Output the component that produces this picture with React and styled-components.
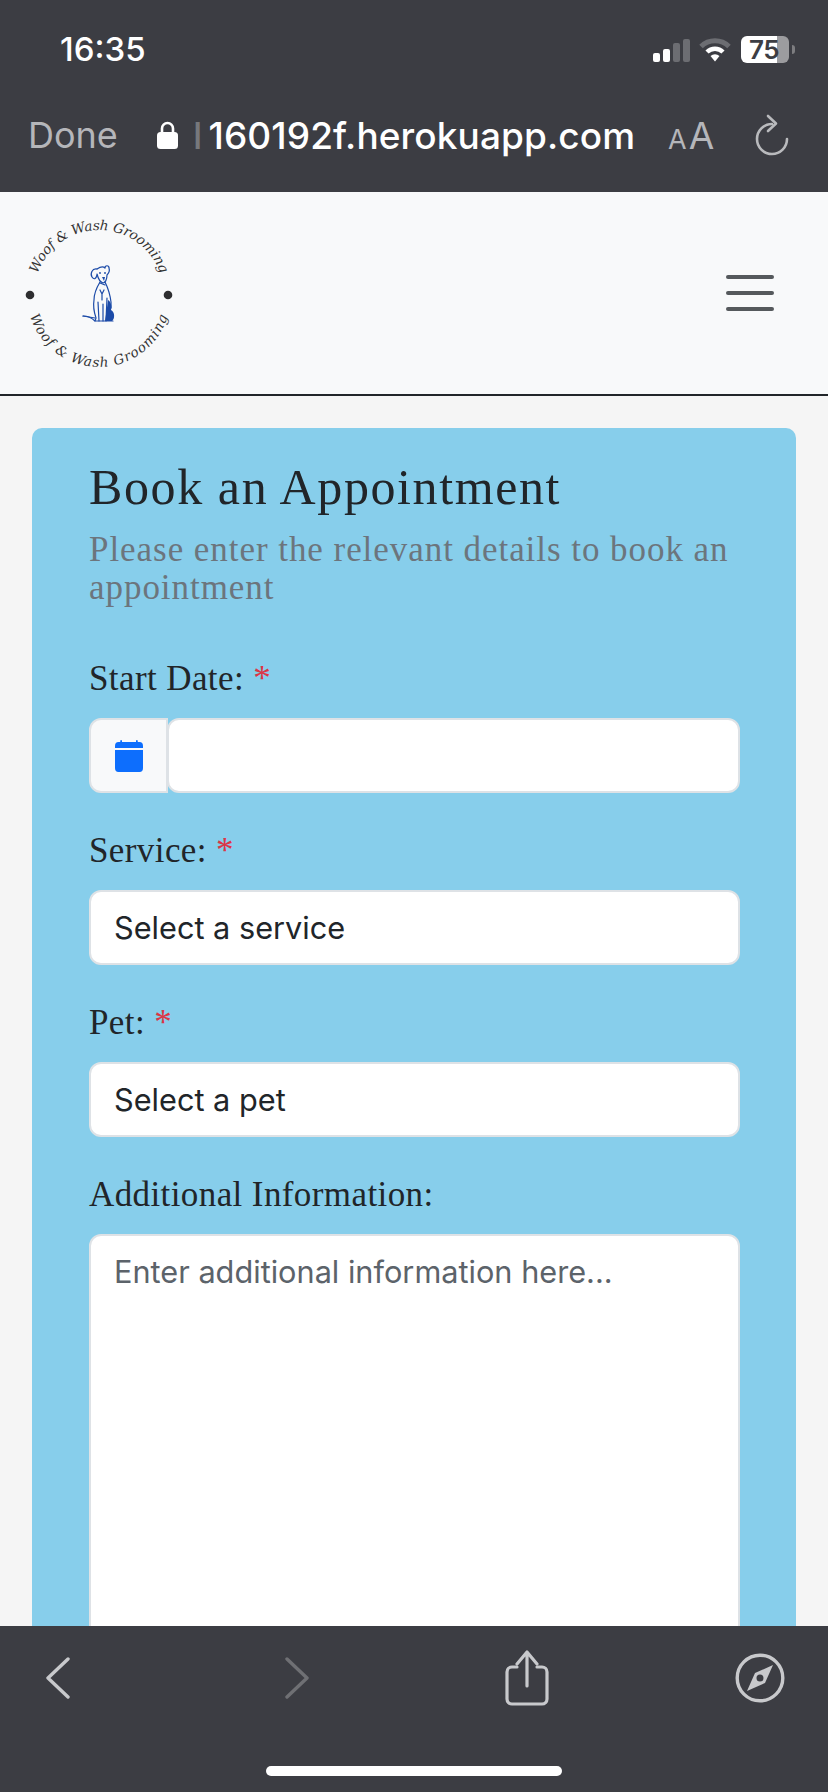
import React from 'react'
import styled, { createGlobalStyle } from 'styled-components'

const GlobalStyle = createGlobalStyle`
  * {
    box-sizing: border-box;
  }
  html, body {
    margin: 0;
    padding: 0;
    background: #3c3d43;
  }
`

const Logo = () => (
  <LogoSvg viewBox="0 3 200 200">
    <defs>
      <path id="arcTop" d="M 34 105 A 65 65 0 0 1 164 105" fill="none" />
      <path id="arcBottom" d="M 27 105 A 72 72 0 0 0 171 105" fill="none" />
    </defs>
    <LogoText>
      <textPath href="#arcTop" startOffset="10.5%" textLength="161" lengthAdjust="spacing">
        Woof &amp; Wash Grooming
      </textPath>
    </LogoText>
    <LogoText>
      <textPath href="#arcBottom" startOffset="9.4%" textLength="183" lengthAdjust="spacing">
        Woof &amp; Wash Grooming
      </textPath>
    </LogoText>
    <circle cx="30" cy="105" r="4.3" fill="#2e2e30" />
    <circle cx="168" cy="105" r="4.3" fill="#2e2e30" />
    {/* dog */}
    <g fill="none" stroke="#1c4ba8" strokeWidth="1.2" strokeLinecap="round" strokeLinejoin="round">
      <path d="M97 79 C92 78 90 84 92 87 C94 90 96 89 97 85" />
      <path d="M97 79 C100 77 103 76 105 78 C105 75 109 75 109 78 C110 81 108 84 107 85 C107 90 105 93 103 93 C100 92 98 88 97 84" />
      <path d="M100 92 C97 97 94 103 94 110 C93 116 94 122 96 128 L95 131" />
      <path d="M105 92 C108 98 110 104 111 112 L111 118" />
      <path d="M100 93 L105 95" />
      <path d="M100 100 L102 104 L104 100 M102 104 L102 110" />
      <path d="M98 112 L99 131 M103 114 L103 131 M107 108 L106 131" />
      <path d="M83 126 C88 126 92 128 95 131 L113 131" />
      <path d="M83 126 L95 128" />
    </g>
    <path d="M108 110 C111 112 112 116 111 120 C115 122 115 129 112 131 L105 131 C106 125 107 118 108 110 Z" fill="#1c4ba8" />
    <circle cx="100" cy="83" r="0.9" fill="#1c4ba8" />
    <circle cx="105" cy="83" r="0.9" fill="#1c4ba8" />
    <path d="M102 87 L105 87 L104 91 Z" fill="#1c4ba8" />
  </LogoSvg>
)

const CalendarIcon = () => (
  <svg width="28" height="32" viewBox="0 0 16 16" preserveAspectRatio="none" fill="#0d6efd">
    <path d="M3.5 0a.5.5 0 0 1 .5.5V1h8V.5a.5.5 0 0 1 1 0V1h1a2 2 0 0 1 2 2v11a2 2 0 0 1-2 2H2a2 2 0 0 1-2-2V5h16V4H0V3a2 2 0 0 1 2-2h1V.5a.5.5 0 0 1 .5-.5" />
  </svg>
)

const App = () => {
  return (
    <Page>
      <GlobalStyle />
      <BrowserTop>
        <StatusRow>
          <Clock>16:35</Clock>
          <StatusIcons>
            <SignalBars>
              <Bar $h={9} $on />
              <Bar $h={13} $on />
              <Bar $h={19} />
              <Bar $h={23} />
            </SignalBars>
            <svg width="32" height="24" viewBox="0 0 32 24" fill="none" strokeLinecap="butt">
              <path d="M2 8.5 A 20 20 0 0 1 30 8.5" stroke="#6c6d72" strokeWidth="5" />
              <path d="M8 14 A 11.5 11.5 0 0 1 24 14" stroke="#fff" strokeWidth="4.5" />
              <path d="M11.5 18 L16 23.5 L20.5 18 A 7 7 0 0 0 11.5 18 Z" fill="#fff" />
            </svg>
            <Battery>
              75
              <BatteryNub />
            </Battery>
          </StatusIcons>
        </StatusRow>
        <UrlRow>
          <DoneLabel>Done</DoneLabel>
          <UrlBox>
            <svg width="21" height="28" viewBox="0 0 21 28" fill="#fff">
              <path d="M5 12 V7.5 A5.5 5.5 0 0 1 16 7.5 V12" fill="none" stroke="#fff" strokeWidth="2.6" />
              <rect x="0" y="11" width="21" height="17" rx="3.5" />
            </svg>
            <UrlText>
              <Faded>l</Faded>160192f.herokuapp.com
            </UrlText>
          </UrlBox>
          <ReaderLabel>
            <SmallA>A</SmallA>A
          </ReaderLabel>
          <svg width="34" height="42" viewBox="0 0 34 42" fill="none" stroke="#b9babd" strokeWidth="2.6" strokeLinecap="round" strokeLinejoin="round">
            <path d="M17 10 A 15 15 0 1 0 32 25" />
            <path d="M13 2 L21 9.5 L13 17" />
          </svg>
        </UrlRow>
      </BrowserTop>

      <SiteHeader>
        <Logo />
        <Hamburger>
          <HamburgerLine />
          <HamburgerLine />
          <HamburgerLine />
        </Hamburger>
      </SiteHeader>

      <Content>
        <Card>
          <Title>Book an Appointment</Title>
          <Subtitle>Please enter the relevant details to book an appointment</Subtitle>

          <Field>
            <FieldLabel>
              Start Date: <Required>*</Required>
            </FieldLabel>
            <InputGroup>
              <Addon>
                <CalendarIcon />
              </Addon>
              <GroupInput type="text" />
            </InputGroup>
          </Field>

          <Field>
            <FieldLabel>
              Service: <Required>*</Required>
            </FieldLabel>
            <Select defaultValue="">
              <option value="">Select a service</option>
            </Select>
          </Field>

          <Field>
            <FieldLabel>
              Pet: <Required>*</Required>
            </FieldLabel>
            <Select defaultValue="">
              <option value="">Select a pet</option>
            </Select>
          </Field>

          <Field>
            <FieldLabel>Additional Information:</FieldLabel>
            <TextArea placeholder="Enter additional information here..." />
          </Field>
        </Card>
      </Content>

      <BrowserBottom>
        <ToolRow>
          <svg width="24" height="44" viewBox="0 0 24 44" fill="none" stroke="#c8c9cc" strokeWidth="3.4" strokeLinecap="round" strokeLinejoin="round">
            <path d="M22 3 L2 22 L22 41" />
          </svg>
          <svg width="24" height="44" viewBox="0 0 24 44" fill="none" stroke="#6f7074" strokeWidth="3.4" strokeLinecap="round" strokeLinejoin="round">
            <path d="M2 3 L22 22 L2 41" />
          </svg>
          <svg width="44" height="56" viewBox="0 0 44 56" fill="none" stroke="#c8c9cc" strokeWidth="3.2" strokeLinecap="round" strokeLinejoin="round">
            <path d="M12 17 H7 A 5 5 0 0 0 2 22 V49 A 5 5 0 0 0 7 54 H37 A 5 5 0 0 0 42 49 V22 A 5 5 0 0 0 37 17 H32" />
            <path d="M22 36 V2 M12 14 L22 2 L32 14" />
          </svg>
          <svg width="50" height="50" viewBox="0 0 50 50" fill="none">
            <circle cx="25" cy="25" r="22.8" stroke="#c8c9cc" strokeWidth="3.4" />
            <path fillRule="evenodd" fill="#c8c9cc" d="M38 12 L30 30 L12 38 L20 20 Z M25 21.5 A 3.5 3.5 0 1 0 25 28.5 A 3.5 3.5 0 1 0 25 21.5 Z" />
          </svg>
        </ToolRow>
        <HomeBar />
      </BrowserBottom>
    </Page>
  )
}

export default App

const Page = styled.div`
  width: 828px;
  height: 1792px;
  display: flex;
  flex-direction: column;
  overflow: hidden;
  background: #f5f5f5;
`
const BrowserTop = styled.div`
  height: 192px;
  flex-shrink: 0;
  background: #3c3d43;
  padding: 36px 34px 0 28px;
  font-family: Inter, 'Liberation Sans', sans-serif;
`
const StatusRow = styled.div`
  height: 27px;
  display: flex;
  align-items: center;
  justify-content: space-between;
`
const Clock = styled.div`
  margin-left: 32px;
  font-size: 33px;
  font-weight: 500;
  color: #fff;
  line-height: 27px;
`
const StatusIcons = styled.div`
  display: flex;
  align-items: center;
  gap: 9px;
  margin-right: 5px;
`
const SignalBars = styled.div`
  display: flex;
  align-items: flex-end;
  gap: 3px;
  height: 24px;
`
const Bar = styled.span`
  width: 7px;
  height: ${(p) => p.$h}px;
  border-radius: 2px;
  background: ${(p) => (p.$on ? '#fff' : '#6c6d72')};
`
const Battery = styled.div`
  position: relative;
  width: 48px;
  height: 27px;
  margin-left: 1px;
  border-radius: 6px;
  background: linear-gradient(90deg, #fff 75%, #9c9c9f 75%);
  color: #3c3d43;
  font-size: 26px;
  font-weight: 600;
  line-height: 27px;
  padding-left: 8px;
  letter-spacing: -0.5px;
`
const BatteryNub = styled.span`
  position: absolute;
  right: -6px;
  top: 9px;
  width: 3px;
  height: 9px;
  border-radius: 0 3px 3px 0;
  background: #7d7d80;
`
const UrlRow = styled.div`
  margin-top: 51px;
  height: 42px;
  display: flex;
  align-items: center;
`
const DoneLabel = styled.div`
  width: 129px;
  font-size: 36px;
  color: #b5b6ba;
`
const UrlBox = styled.div`
  width: 511px;
  display: flex;
  align-items: center;
  gap: 15px;
`
const UrlText = styled.div`
  font-size: 37px;
  font-weight: 500;
  color: #fff;
  white-space: nowrap;
  letter-spacing: 0.1px;
`
const Faded = styled.span`
  color: #77787c;
  margin-right: 6px;
`
const ReaderLabel = styled.div`
  width: 87px;
  font-size: 37px;
  color: #b5b6ba;
`
const SmallA = styled.span`
  font-size: 27px;
  margin-right: 2px;
`
const SiteHeader = styled.header`
  height: 204px;
  flex-shrink: 0;
  background: #f8f9fa;
  border-bottom: 2px solid #212529;
  padding-right: 54px;
  display: flex;
  align-items: center;
  justify-content: space-between;
`
const LogoSvg = styled.svg`
  width: 200px;
  height: 200px;
  flex-shrink: 0;
`
const LogoText = styled.text`
  font-family: 'DejaVu Serif', serif;
  font-style: italic;
  font-size: 13.5px;
  fill: #333;
`
const Hamburger = styled.div`
  width: 48px;
  display: flex;
  flex-direction: column;
  gap: 12px;
`
const HamburgerLine = styled.span`
  height: 4px;
  border-radius: 2px;
  background: #55595c;
`
const Content = styled.main`
  flex: 1;
  min-height: 0;
  overflow: hidden;
  padding: 32px 32px 0;
`
const Card = styled.section`
  background: #87ceeb;
  border-radius: 10px 10px 0 0;
  padding: 30px 56px 0 57px;
  font-family: 'Liberation Serif', serif;
`
const Title = styled.h1`
  margin: 0;
  font-size: 50px;
  font-weight: 400;
  line-height: 58px;
  color: #212529;
  letter-spacing: 1.6px;
`
const Subtitle = styled.p`
  margin: 15px 0 49px;
  font-size: 35px;
  line-height: 38px;
  color: #6c757d;
  letter-spacing: 0.95px;
`
const Field = styled.div`
  margin-top: 35px;
  display: flex;
  flex-direction: column;
`
const FieldLabel = styled.label`
  height: 62px;
  font-size: 35px;
  line-height: 46px;
  color: #212529;
  letter-spacing: 0.4px;
`
const Required = styled.span`
  color: #dc3545;
`
const InputGroup = styled.div`
  display: flex;
  height: 75px;
`
const Addon = styled.div`
  width: 79px;
  margin-right: -1px;
  display: flex;
  align-items: center;
  justify-content: center;
  background: #f8f9fa;
  border: 2px solid #dee2e6;
  border-radius: 12px 0 0 12px;
`
const GroupInput = styled.input`
  flex: 1;
  min-width: 0;
  background: #fff;
  border: 2px solid #dee2e6;
  border-radius: 12px;
  outline: none;
`
const Select = styled.select`
  height: 75px;
  appearance: none;
  background: #fff;
  border: 2px solid #dee2e6;
  border-radius: 12px;
  padding: 0 23px;
  font-family: Inter, 'Liberation Sans', sans-serif;
  font-size: 30.7px;
  color: #212529;
  outline: none;
`
const TextArea = styled.textarea`
  height: 600px;
  background: #fff;
  border: 2px solid #dee2e6;
  border-radius: 12px;
  padding: 14px 23px;
  font-family: Inter, 'Liberation Sans', sans-serif;
  font-size: 30.7px;
  line-height: 44px;
  outline: none;
  resize: none;
  &::placeholder {
    color: #5c636a;
    opacity: 1;
  }
`
const BrowserBottom = styled.div`
  height: 166px;
  flex-shrink: 0;
  background: #3c3d43;
  display: flex;
  flex-direction: column;
  align-items: center;
`
const ToolRow = styled.div`
  width: 100%;
  height: 78px;
  padding: 24px 0 0 46px;
  display: grid;
  grid-template-columns: 239px 220px 230px auto;
  align-items: center;
  justify-content: start;
`
const HomeBar = styled.div`
  margin-top: 62px;
  width: 296px;
  height: 10px;
  border-radius: 5px;
  background: #fff;
`
